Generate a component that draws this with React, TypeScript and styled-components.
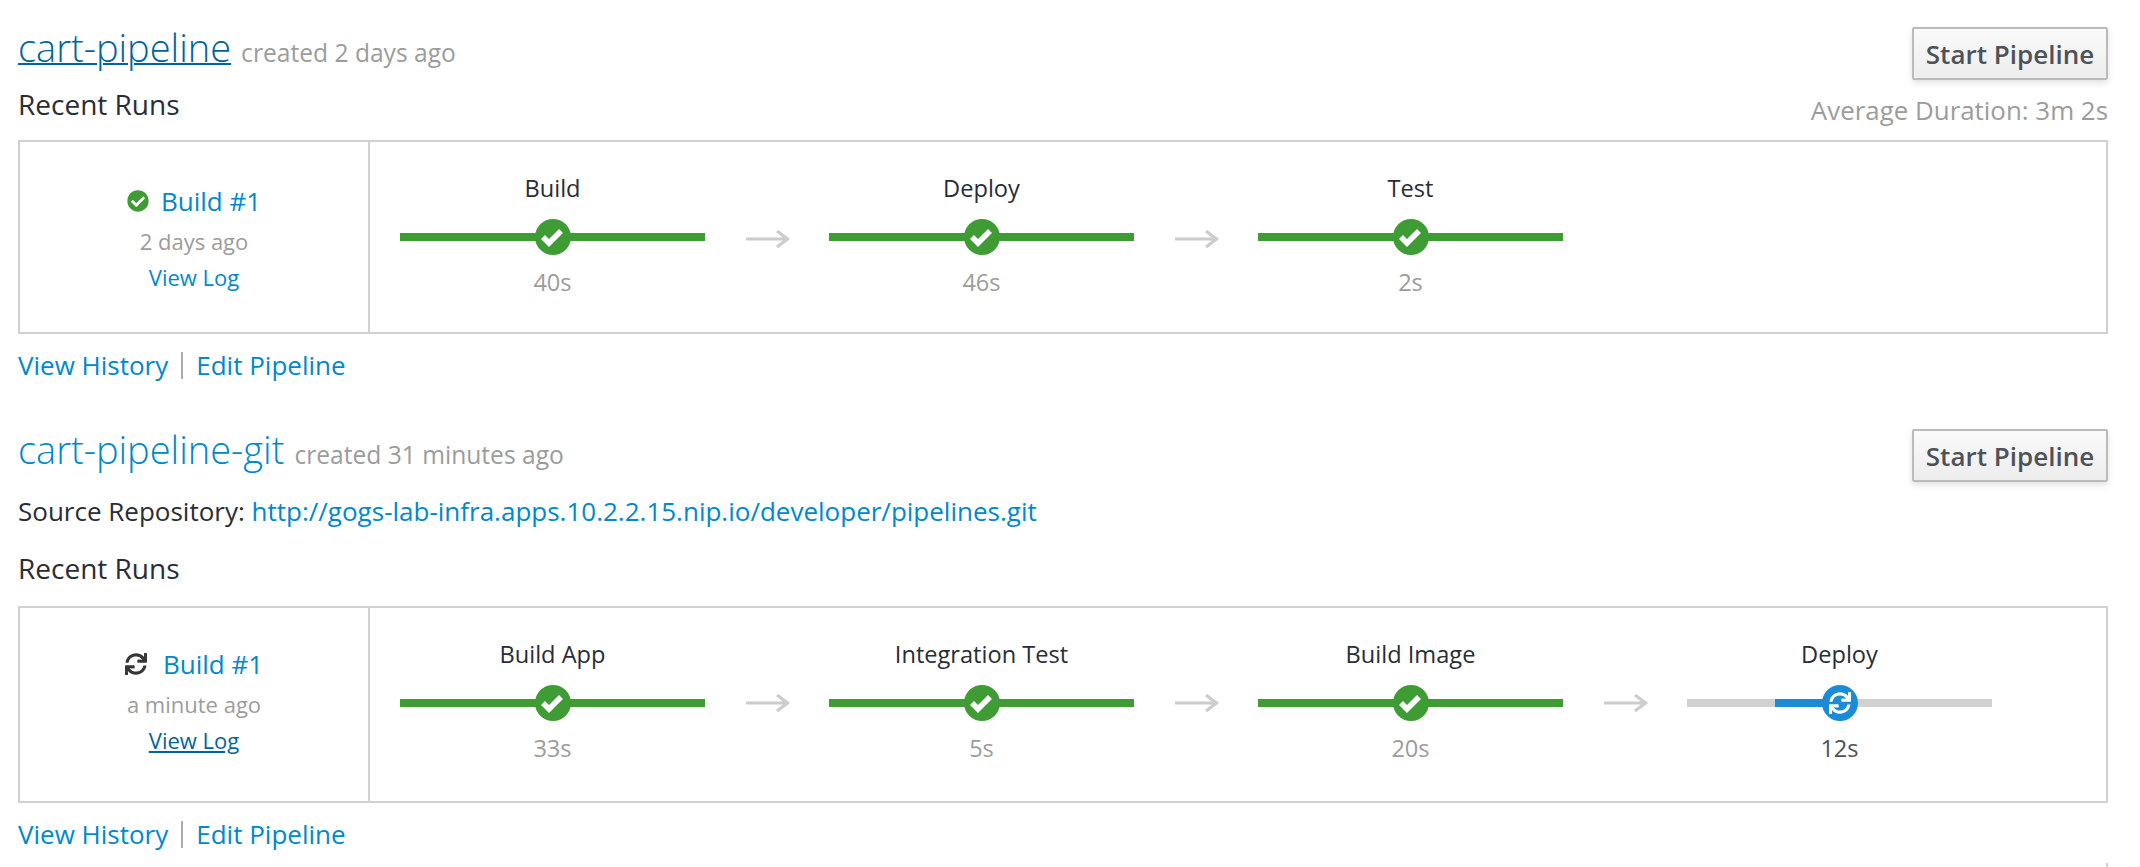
import React from "react";
import styled, { createGlobalStyle } from "styled-components";
import { FaCheckCircle, FaSync } from "react-icons/fa";

const Global = createGlobalStyle`
  html, body { margin: 0; padding: 0; background: #fff; }
  body { font-family: "Open Sans", "Liberation Sans", sans-serif; color: #292e34; overflow: hidden; }
  * { box-sizing: border-box; }
`;

const Page = styled.div`
  width: 2140px;
  height: 867px;
  overflow: hidden;
  padding: 28px 32px 0 18px;
`;

const Section = styled.section<{ $gap: number }>`
  margin-bottom: ${(p) => p.$gap}px;
`;

const Header = styled.div`
  display: flex;
  justify-content: space-between;
  align-items: flex-start;
  height: 52px;
`;

const TitleLine = styled.div`
  display: flex;
  align-items: baseline;
  gap: 10px;
  line-height: 46px;
  height: 46px;
  margin-top: -4px;
`;

const TitleLink = styled.a<{ $hover?: boolean }>`
  font-size: 38px;
  font-weight: 300;
  color: ${(p) => (p.$hover ? "#00659c" : "#0088ce")};
  text-decoration: ${(p) => (p.$hover ? "underline" : "none")};
  text-decoration-thickness: 2px;
`;

const Muted = styled.span`
  font-size: 24.6px;
  color: #9c9c9c;
`;

const StartButton = styled.button`
  width: 196px;
  height: 53px;
  margin-top: -1px;
  border: 2px solid #bbb;
  border-radius: 2px;
  background: linear-gradient(#fafafa, #ededed);
  box-shadow: 0 3px 6px rgba(0, 0, 0, 0.12);
  color: #4d5258;
  font-family: inherit;
  font-size: 26px;
  font-weight: 600;
  padding: 0;
`;

const SubRow = styled.div<{ $h: number }>`
  display: flex;
  justify-content: space-between;
  align-items: flex-start;
  height: ${(p) => p.$h}px;
`;

const RecentRuns = styled.div<{ $top: number }>`
  font-size: 28px;
  line-height: 36px;
  margin-top: ${(p) => p.$top}px;
`;

const Average = styled.div`
  font-size: 25.9px;
  line-height: 36px;
  color: #9c9c9c;
  margin-top: 12px;
`;

const SourceLine = styled.div`
  font-size: 26px;
  line-height: 36px;
  margin-top: 11px;
`;

const TextLink = styled.a`
  color: #0088ce;
`;

const RunBox = styled.div<{ $h: number }>`
  display: flex;
  height: ${(p) => p.$h}px;
  border: 2px solid #d1d1d1;
`;

const Summary = styled.div<{ $shift: number }>`
  flex: 0 0 350px;
  border-right: 2px solid #d1d1d1;
  display: flex;
  flex-direction: column;
  align-items: center;
  justify-content: center;
  padding-top: ${(p) => Math.max(p.$shift, 0)}px;
  padding-bottom: ${(p) => Math.max(-p.$shift, 0)}px;
`;

const BuildLine = styled.div<{ $gap: number }>`
  display: flex;
  align-items: center;
  gap: ${(p) => p.$gap}px;
  font-size: 26px;
  line-height: 36px;
  color: #0088ce;
`;

const Ago = styled.div`
  font-size: 22px;
  line-height: 36px;
  margin-top: 4px;
  color: #9c9c9c;
`;

const LogLink = styled.a<{ $hover?: boolean }>`
  font-size: 22px;
  line-height: 36px;
  color: ${(p) => (p.$hover ? "#00659c" : "#0088ce")};
  text-decoration: ${(p) => (p.$hover ? "underline" : "none")};
`;

const Stages = styled.div`
  display: flex;
  align-items: flex-start;
  padding: 28px 0 0 30px;
`;

const Stage = styled.div`
  width: 305px;
  display: flex;
  flex-direction: column;
  align-items: center;
`;

const StageName = styled.div`
  font-size: 23.6px;
  line-height: 36px;
  height: 36px;
`;

const Track = styled.div`
  position: relative;
  width: 100%;
  height: 36px;
  margin-top: 13px;
  display: flex;
  align-items: center;
  justify-content: center;
`;

const Bar = styled.div<{ $done?: boolean }>`
  position: absolute;
  left: 0;
  right: 0;
  top: 14px;
  height: 8px;
  background: ${(p) => (p.$done ? "#3f9c35" : "#d1d1d1")};
`;

const Progress = styled.div`
  position: absolute;
  left: 88px;
  width: 70px;
  top: 14px;
  height: 8px;
  background: #1a8cd5;
`;

const Node = styled.div<{ $color: string }>`
  position: relative;
  width: 36px;
  height: 36px;
  border-radius: 50%;
  background: ${(p) => p.$color};
  color: #fff;
  display: flex;
  align-items: center;
  justify-content: center;
`;

const Duration = styled.div<{ $active?: boolean }>`
  font-size: 23.6px;
  line-height: 36px;
  margin-top: 9px;
  color: ${(p) => (p.$active ? "#4d5258" : "#9c9c9c")};
`;

const Arrow = styled.svg<{ $top: number }>`
  flex: 0 0 124px;
  height: 20px;
  margin-top: ${(p) => p.$top}px;
`;

const Footer = styled.div`
  display: flex;
  align-items: center;
  font-size: 26px;
  line-height: 36px;
  margin-top: 13px;
`;

const Divider = styled.span`
  width: 2px;
  height: 27px;
  background: #aaa;
  margin: 0 13px 0 13px;
`;

const Tick = styled.div`
  width: 2px;
  height: 6px;
  margin: 11px 0 0 auto;
  background: #d1d1d1;
`;

const ArrowIcon = ({ top }: { top: number }) => (
  <Arrow $top={top} viewBox="0 0 124 20">
    <path d="M41 10 H82 M72 2 L82.5 10 L72 18" fill="none" stroke="#ccc" strokeWidth="3.2" />
  </Arrow>
);

const CheckMark = () => (
  <svg width="36" height="36" viewBox="0 0 36 36">
    <path d="M8 18 L14 24 L26 12" fill="none" stroke="#fff" strokeWidth="5.6" strokeLinejoin="miter" />
  </svg>
);

type StageData = { name: string; time: string; running?: boolean };

const StageItem = ({ name, time, running }: StageData) => (
  <Stage>
    <StageName>{name}</StageName>
    <Track>
      <Bar $done={!running} />
      {running && <Progress />}
      {running ? (
        <Node $color="#1a8cd5">
          <FaSync size={22} />
        </Node>
      ) : (
        <Node $color="#3f9c35">
          <CheckMark />
        </Node>
      )}
    </Track>
    <Duration $active={running}>{time}</Duration>
  </Stage>
);

const StageList = ({ stages, arrowTop }: { stages: StageData[]; arrowTop: number }) => (
  <Stages>
    {stages.map((s, i) => (
      <React.Fragment key={s.name}>
        {i > 0 && <ArrowIcon top={arrowTop} />}
        <StageItem {...s} />
      </React.Fragment>
    ))}
  </Stages>
);

const FooterLinks = () => (
  <Footer>
    <TextLink>View History</TextLink>
    <Divider />
    <TextLink>Edit Pipeline</TextLink>
  </Footer>
);

export default function App() {
  return (
    <Page>
      <Global />
      <Section $gap={47}>
        <Header>
          <TitleLine>
            <TitleLink $hover>cart-pipeline</TitleLink>
            <Muted>created 2 days ago</Muted>
          </TitleLine>
          <StartButton>Start Pipeline</StartButton>
        </Header>
        <SubRow $h={60}>
          <RecentRuns $top={6}>Recent Runs</RecentRuns>
          <Average>Average Duration: 3m 2s</Average>
        </SubRow>
        <RunBox $h={194}>
          <Summary $shift={4}>
            <BuildLine $gap={12}>
              <FaCheckCircle size={22} color="#3f9c35" />
              <span>Build #1</span>
            </BuildLine>
            <Ago>2 days ago</Ago>
            <LogLink>View Log</LogLink>
          </Summary>
          <StageList
            arrowTop={59}
            stages={[
              { name: "Build", time: "40s" },
              { name: "Deploy", time: "46s" },
              { name: "Test", time: "2s" },
            ]}
          />
        </RunBox>
        <FooterLinks />
      </Section>
      <Section $gap={0}>
        <Header>
          <TitleLine>
            <TitleLink>cart-pipeline-git</TitleLink>
            <Muted>created 31 minutes ago</Muted>
          </TitleLine>
          <StartButton>Start Pipeline</StartButton>
        </Header>
        <SourceLine>
          Source Repository: <TextLink>http://gogs-lab-infra.apps.10.2.2.15.nip.io/developer/pipelines.git</TextLink>
        </SourceLine>
        <SubRow $h={77}>
          <RecentRuns $top={21}>Recent Runs</RecentRuns>
        </SubRow>
        <RunBox $h={197}>
          <Summary $shift={-6}>
            <BuildLine $gap={16}>
              <FaSync size={22} color="#363636" />
              <span>Build #1</span>
            </BuildLine>
            <Ago>a minute ago</Ago>
            <LogLink $hover>View Log</LogLink>
          </Summary>
          <StageList
            arrowTop={57}
            stages={[
              { name: "Build App", time: "33s" },
              { name: "Integration Test", time: "5s" },
              { name: "Build Image", time: "20s" },
              { name: "Deploy", time: "12s", running: true },
            ]}
          />
        </RunBox>
        <FooterLinks />
        <Tick />
      </Section>
    </Page>
  );
}
